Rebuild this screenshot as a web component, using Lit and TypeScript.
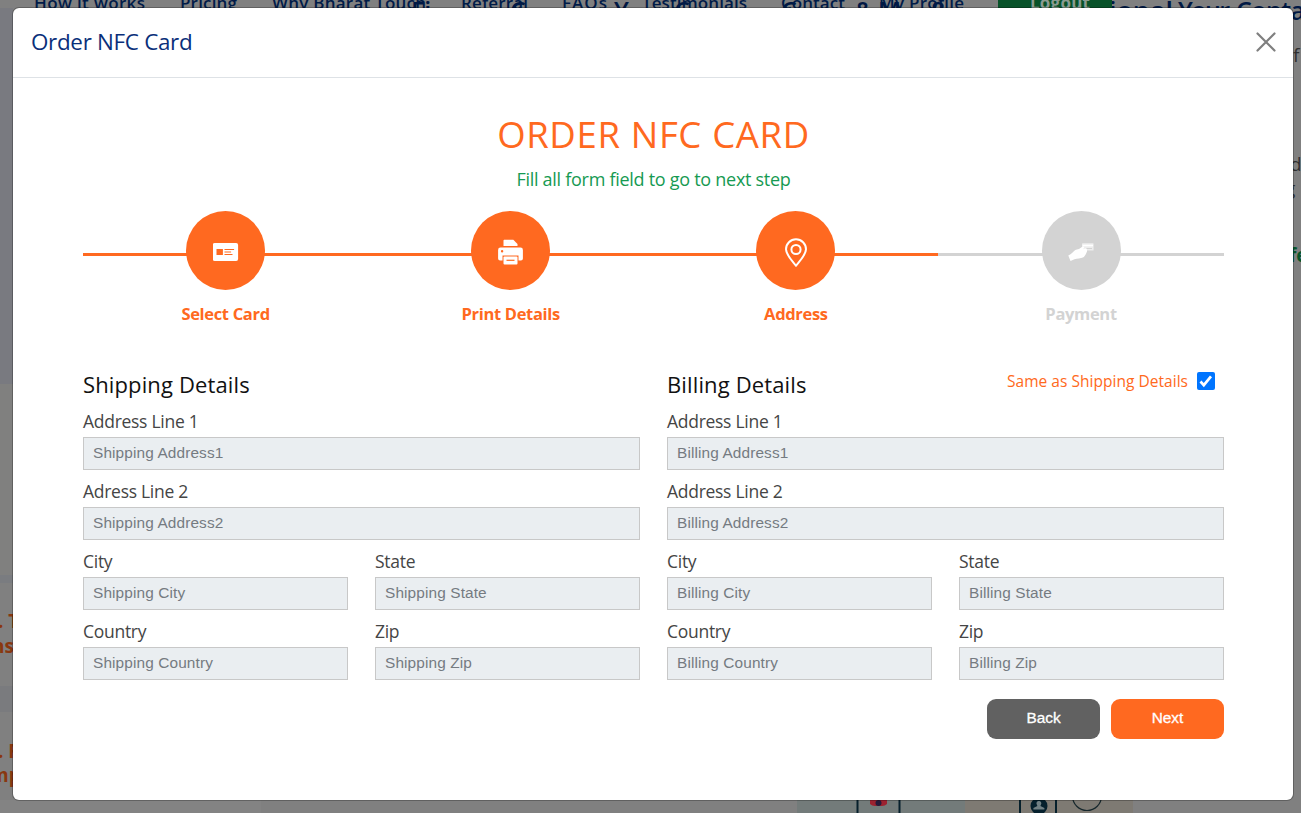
import { LitElement, html, svg, css } from "lit";
import { customElement, property, state } from "lit/decorators.js";
import { classMap } from "lit/directives/class-map.js";

const icons: Record<string, unknown> = {
  card: html`<svg width="26" height="26" viewBox="0.500 0 26 26">
    <rect x=".2" y="4" width="25.4" height="18" rx="2" fill="#fff" />
    <rect x="4" y="10" width="6.4" height="6" fill="#ff6920" />
    <path d="M12 10.500h9.600M12 13h6.600M12 15.500h8" stroke="#ff6920" stroke-width="1" />
  </svg>`,
  print: html`<svg width="26" height="26" viewBox="0.500 0 26 26">
    <path d="M6 7V1.800C6 1.200 6.500.8 7 .8h8.800L20 5v2z" fill="#fff" />
    <path fill-rule="evenodd" fill="#fff" d="M3 8.600h20a2.400 2.400 0 0 1 2.400 2.400v8.500a2 2 0 0 1-2 2H21V16.500H5V21.500H2.600a2 2 0 0 1-2-2V11A2.400 2.400 0 0 1 3 8.600zM4.600 11a1.200 1.200 0 1 0 0 2.400 1.200 1.200 0 0 0 0-2.400z" />
    <rect x="6" y="17.600" width="14" height="8" rx="1" fill="#fff" />
    <path d="M9 21.300h8" stroke="#ff6920" stroke-width="1.200" />
  </svg>`,
  pin: html`<svg width="26" height="30" viewBox="0 -1.300 26 30" fill="none" stroke="#fff" stroke-width="2">
    <path d="M13 27.500C11 24.500 3 17 3 11a10 10 0 0 1 20 0C23 17 15 24.500 13 27.500z" stroke-linejoin="round" />
    <circle cx="13" cy="11.200" r="4.600" />
  </svg>`,
  pay: html`<svg width="26" height="26" viewBox="0 0 26 26">
    <rect x="14" y="4.300" width="11.600" height="7.200" rx=".6" fill="#fff" opacity=".6" />
    <path d="M14.600 6.500h10.400" stroke="#fff" stroke-width="1.600" />
    <path d="M18.500 9.500h5.500" stroke="#d3d3d3" stroke-width="1" />
    <path fill="#fff" d="M.3 16.500C3 15.500 4.600 13.500 7 11.300c1.200-1 2.600-.8 4-1.400l3.600-2.300c1.200-.6 2 .4 1.300 1.300l-1 1.300 2.600-.6c1.700.3 1.900 2 1.300 3.300-.8 2-1.800 4.600-3.900 5.700-2.200 1.100-5.500.8-8.400 1.700L2.500 22z" />
  </svg>`,
};

@customElement("order-step")
class OrderStep extends LitElement {
  @property() label = "";
  @property() icon = "";
  @property({ type: Boolean }) done = false;
  static styles = css`
    :host { flex: 1; display: block; }
    .step { display: flex; flex-direction: column; align-items: center; color: #d3d3d3;
      background: linear-gradient(#d3d3d3, #d3d3d3) 0 42px / 100% 3px no-repeat; }
    .step.done { color: #ff6920; background-image: linear-gradient(#ff6920, #ff6920); }
    .dot { width: 79px; height: 79px; border-radius: 50%; background: currentColor; display: flex;
      align-items: center; justify-content: center; padding-top: 3px; box-sizing: border-box; }
    .label { font: 700 16.5px/24px "Open Sans", sans-serif; letter-spacing: -0.33px; margin-top: 12px; }
  `;
  render() {
    return html`<div class=${classMap({ step: true, done: this.done })}>
      <div class="dot">${icons[this.icon]}</div><div class="label">${this.label}</div>
    </div>`;
  }
}

@customElement("address-form")
class AddressForm extends LitElement {
  @property() kind = "Shipping";
  @property() secondLabel = "Address Line 2";
  @property({ type: Boolean }) toggle = false;
  @state() private same = true;
  static styles = css`
    :host { display: block; font-family: "Open Sans", sans-serif; }
    .head { display: flex; justify-content: space-between; height: 41px; }
    h2 { font-size: 22px; font-weight: 400; line-height: 39px; letter-spacing: 0.13px; margin: 0; color: #111; }
    .same { display: flex; align-items: center; height: 18px; margin: 7px 9px 0 0; gap: 9px; color: #ff6920;
      font-size: 15.5px; line-height: 18px; letter-spacing: 0.03px; }
    .same span { margin-top: -1px; }
    .check { width: 18px; height: 18px; border-radius: 2px; background: #0075ff; display: block; }
    input[type="checkbox"] { display: none; }
    .grid { display: grid; grid-template-columns: 265px 265px; column-gap: 27px; row-gap: 6px; }
    .wide { grid-column: span 2; }
    label.field { display: block; font-size: 17.5px; line-height: 30px; letter-spacing: -0.28px; color: #454545; }
    .field input { display: block; width: 100%; height: 33px; box-sizing: border-box; border: 1px solid #c8c8c8; margin-top: 1px;
      background: #eaeef1; padding: 0 9px 2px; font: 15.4px "Liberation Sans", Arial, sans-serif; letter-spacing: 0.12px;
      border-radius: 0; outline: none; }
    input::placeholder { color: #757b81; opacity: 1; }
  `;
  private field(label: string, name: string, wide = false) {
    return html`<label class=${classMap({ field: true, wide })}>${label}
      <input type="text" placeholder="${this.kind} ${name}" /></label>`;
  }
  render() {
    return html`
      <div class="head"><h2>${this.kind} Details</h2>
        ${this.toggle ? html`<label class="same"><span>Same as Shipping Details</span>
          <input type="checkbox" .checked=${this.same} @change=${() => (this.same = !this.same)} />
          <svg class="check" viewBox="0 0 18 18">${this.same ? svg`<path d="M3.500 9.500l3.300 3.600 7.200-8.700" fill="none" stroke="#fff" stroke-width="2.700" />` : null}</svg>
        </label>` : null}
      </div>
      <div class="grid">
        ${this.field("Address Line 1", "Address1", true)}
        ${this.field(this.secondLabel, "Address2", true)}
        ${this.field("City", "City")}${this.field("State", "State")}
        ${this.field("Country", "Country")}${this.field("Zip", "Zip")}
      </div>`;
  }
}

@customElement("page-backdrop")
class PageBackdrop extends LitElement {
  static styles = css`
    :host { display: block; }
    svg { display: block; font-family: "Open Sans", sans-serif; }
    .nav { font-size: 17px; font-weight: 600; fill: #001b48; }
    .hero { font-size: 25px; font-weight: 600; fill: #001844; }
    .copy { font-size: 19px; fill: #303030; }
    .offer { font-size: 19px; font-weight: 700; fill: #07552a; }
    .feature { font-size: 19px; font-weight: 700; fill: #89370f; }
  `;
  render() {
    const nav: [string, number, number][] = [["How it works", 34, 111], ["Pricing", 180, 57], ["Why Bharat Touch", 272, 154],
      ["Referral", 461, 67], ["FAQs", 562, 45], ["Testimonials", 642, 105], ["Contact", 781, 64], ["My Profile", 879, 85]];
    const hero: [string, number][] = [["Fi", 411], ["C", 510], ["Y", 614], ["C", 674], ["C", 781], ["&", 855], ["M", 878], ["8", 931]];
    return html`<svg width="1301" height="813" viewBox="0 0 1301 813">
      <rect width="1301" height="813" fill="#808080" />
      <rect y="8" width="13" height="376" fill="#797a80" />
      <rect y="384" width="13" height="191" fill="#80807f" />
      <rect y="575" width="13" height="8" fill="#7a7c80" />
      <rect y="686" width="13" height="26" fill="#7a7b7e" />
      <rect x="0" y="800" width="261" height="13" fill="#838383" />
      ${hero.map(([t, x]) => svg`<text class="hero" x=${x} y="20">${t}</text>`)}
      <text class="hero" x="1109" y="20" textLength="64" lengthAdjust="spacingAndGlyphs">ional</text>
      <text class="hero" x="1178" y="20" textLength="52">Your</text>
      <text class="hero" x="1236" y="20" textLength="69">Conta</text>
      <rect x="998" y="0" width="114" height="8" fill="#085229" />
      <text x="1030" y="9" textLength="60" font-size="17" font-weight="700" fill="#8a9b91">Logout</text>
      ${nav.map(([t, x, w]) => svg`<text class="nav" x=${x} y="9" textLength=${w}>${t}</text>`)}
      <text class="copy" x="1293" y="62">f</text>
      <text class="copy" x="1290" y="171">d</text>
      <text class="copy" x="1285" y="195">g</text>
      <text class="offer" x="1289" y="262">fe</text>
      <text class="feature" x="-2" y="628">. T</text>
      <text class="feature" x="-8" y="653" textLength="22">ns</text>
      <text class="feature" x="-2" y="758">. F</text>
      <text class="feature" x="-10" y="782">mp</text>
      <rect x="797" y="800" width="168" height="13" fill="#737b7a" />
      <rect x="965" y="800" width="168" height="13" fill="#7e7a73" />
      <path d="M857.500 800v13M899.500 800v13M1020 800v13M1056 800v13" stroke="#06202c" stroke-width="2" />
      <path d="M870 800h17v4q-2 2-5 2h-7q-3 0-5-2z" fill="#9c2230" /><circle cx="878.500" cy="803" r="3" fill="#251b3c" />
      <circle cx="1039" cy="806" r="8.500" fill="#05202d" />
      <path d="M1039 801a2.300 2.300 0 0 1 2 3.500l-.6 1.500 4 2v1.500h-11V808l4-2-.6-1.500a2.300 2.300 0 0 1 2.200-3.500z" fill="#718084" />
      <circle cx="1087" cy="796" r="14.500" fill="none" stroke="#17282d" stroke-width="1.200" />
    </svg>`;
  }
}

@customElement("app-root")
class AppRoot extends LitElement {
  static styles = css`
    :host { display: block; position: relative; width: 1301px; height: 813px; overflow: hidden; font-family: "Open Sans", sans-serif; }
    .modal { position: absolute; left: 12px; top: 7px; width: 1282px; height: 794px; box-sizing: border-box;
      background: #fff; background-clip: padding-box; border: 1px solid rgba(0, 0, 0, 0.25); border-radius: 7px; }
    .bar { display: flex; justify-content: space-between; align-items: center; height: 70px; box-sizing: border-box;
      padding: 0 18px 2px; border-bottom: 1px solid #dee2e6; }
    .title { font-size: 22.4px; letter-spacing: -0.3px; color: #0a2f7a; }
    .close { display: block; margin-right: -1px; }
    .body { padding: 33px 69px 0 70px; }
    h1 { margin: 0; text-align: center; font-weight: 400; font-size: 36.5px; line-height: 46px; letter-spacing: 0.65px; color: #ff6920; }
    .hint { margin: 10px 0 0; text-align: center; font-size: 18px; line-height: 24px; letter-spacing: -0.28px; color: #169a52; }
    .steps { display: flex; margin: 20px 0.400px 0 0; }
    .forms { display: grid; grid-template-columns: 557px 557px; column-gap: 27px; margin-top: 39px; }
    .actions { display: flex; justify-content: flex-end; gap: 11px; margin-top: 19px; }
    button { width: 113px; height: 40px; border: 0; border-radius: 9px; padding: 0 0 3px; color: #fff; background: #ff6920;
      font: 15.400px "Liberation Sans", Arial, sans-serif; -webkit-text-stroke: 0.300px #fff; }
    .back { background: #616161; }
  `;
  render() {
    return html`
      <page-backdrop></page-backdrop>
      <div class="modal">
        <div class="bar"><div class="title">Order NFC Card</div>
          <svg class="close" width="20" height="20" viewBox="0 0 20 20"><path d="M1.500 1.500l17 17M18.500 1.500l-17 17" stroke="#7f7f7f" stroke-width="2.200" stroke-linecap="round" /></svg>
        </div>
        <div class="body">
          <h1>ORDER NFC CARD</h1>
          <p class="hint">Fill all form field to go to next step</p>
          <div class="steps">
            <order-step label="Select Card" icon="card" done></order-step>
            <order-step label="Print Details" icon="print" done></order-step>
            <order-step label="Address" icon="pin" done></order-step>
            <order-step label="Payment" icon="pay"></order-step>
          </div>
          <div class="forms">
            <address-form kind="Shipping" .secondLabel=${"Adress Line 2"}></address-form>
            <address-form kind="Billing" toggle></address-form>
          </div>
          <div class="actions"><button class="back">Back</button><button>Next</button></div>
        </div>
      </div>`;
  }
}
